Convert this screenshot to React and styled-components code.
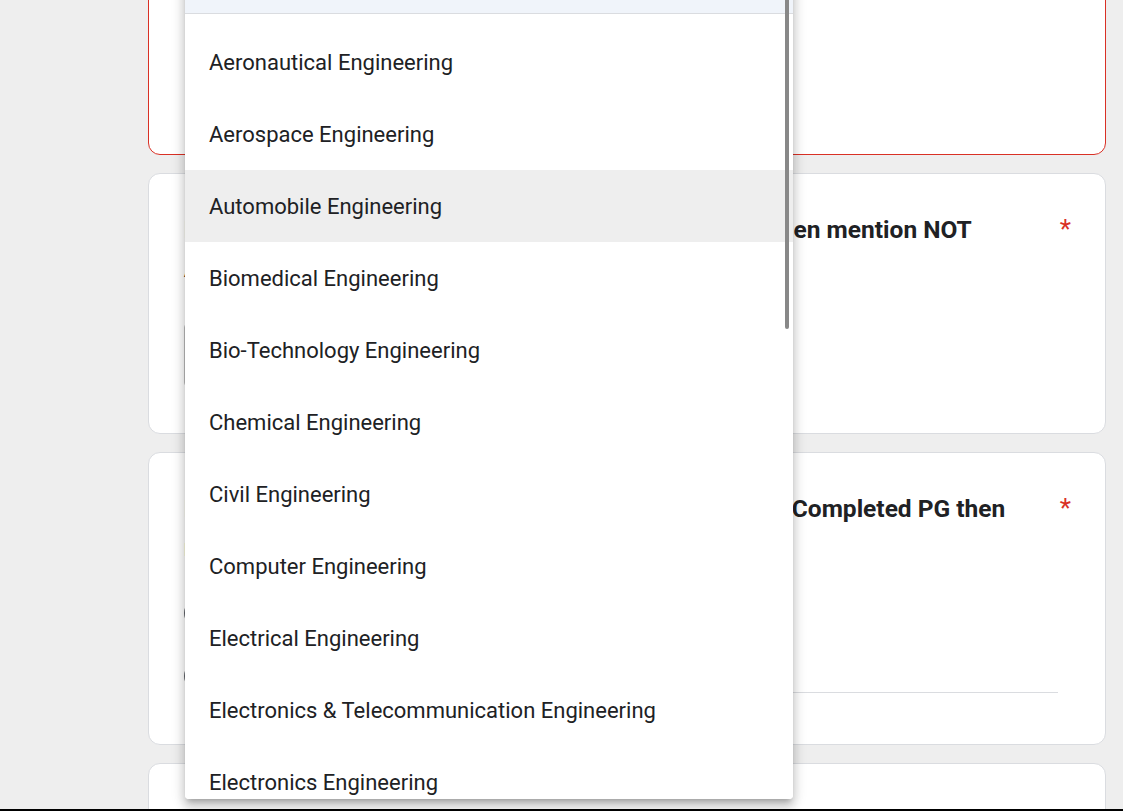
import React from 'react'
import styled, { createGlobalStyle } from 'styled-components'

const options = [
  'Aeronautical Engineering',
  'Aerospace Engineering',
  'Automobile Engineering',
  'Biomedical Engineering',
  'Bio-Technology Engineering',
  'Chemical Engineering',
  'Civil Engineering',
  'Computer Engineering',
  'Electrical Engineering',
  'Electronics & Telecommunication Engineering',
  'Electronics Engineering',
]

export default function App() {
  return (
    <Page>
      <GlobalStyle />
      <Column>
        <Card error height="260px">
          <QuestionRow>
            <Title>UG Branch</Title>
            <Required>*</Required>
          </QuestionRow>
        </Card>

        <Card>
          <QuestionRow>
            <Title>PG Specialization (If you have still not Completed PG then mention NOT APPLICABLE)</Title>
            <Required>*</Required>
          </QuestionRow>
          <SelectBox gap="34px">Choose</SelectBox>
        </Card>

        <Card>
          <QuestionRow>
            <Title>P.G. Aggregate Percentage (in %), or CGPA (If you have Completed PG then mention score in percentage)</Title>
            <Required>*</Required>
          </QuestionRow>
          <Options>
            <OptionRow>
              <Radio />
              <OptionLabel>NOT APPLICABLE</OptionLabel>
            </OptionRow>
            <OptionRow>
              <Radio />
              <OptionLabel>Other:</OptionLabel>
              <OtherInput />
            </OptionRow>
          </Options>
        </Card>

        <Card height="200px">
          <QuestionRow>
            <Title>Year of Passing</Title>
            <Required>*</Required>
          </QuestionRow>
        </Card>
      </Column>

      <Menu>
        <ChosenItem>Choose</ChosenItem>
        <MenuList>
          {options.map((o) => (
            <MenuItem key={o} active={o === 'Automobile Engineering'}>
              {o}
            </MenuItem>
          ))}
        </MenuList>
        <ScrollThumb />
      </Menu>

      <BottomEdge />
    </Page>
  )
}

const GlobalStyle = createGlobalStyle`
  html, body {
    margin: 0;
    padding: 0;
    overflow: hidden;
    background: #eeeeee;
    font-family: Roboto, "Noto Sans", "Liberation Sans", sans-serif;
  }
  * { box-sizing: border-box; }
`

const Page = styled.div`
  position: relative;
  height: 811px;
  overflow: hidden;
  background: #eeeeee;
`

const Column = styled.div`
  width: 958px;
  margin: -105px 0 0 148px;
  display: flex;
  flex-direction: column;
  gap: 18px;
`

const Card = styled.div`
  background: #ffffff;
  border: 1px solid ${(p) => (p.error ? '#d93025' : '#dadce0')};
  border-radius: 12px;
  padding: 36px 34px 45px 35px;
  height: ${(p) => p.height || 'auto'};
  display: flex;
  flex-direction: column;
`

const QuestionRow = styled.div`
  display: flex;
  align-items: flex-start;
  gap: 16px;
`

const Title = styled.div`
  flex: 1;
  padding-right: 10px;
  font-size: 24.5px;
  line-height: 39px;
  font-weight: 700;
  color: #202124;
`

const Required = styled.span`
  color: #d93025;
  font-size: 26px;
  line-height: 39px;
  font-weight: 400;
`

const SelectBox = styled.div`
  margin-top: ${(p) => p.gap};
  width: 300px;
  height: 66px;
  border: 1px solid #bdbdbd;
  border-radius: 6px;
  display: flex;
  align-items: center;
  padding-left: 24px;
  font-size: 22px;
  color: #202124;
`

const Options = styled.div`
  margin-top: 14px;
  margin-bottom: -8px;
  display: flex;
  flex-direction: column;
`

const OptionRow = styled.div`
  height: 63px;
  display: flex;
  align-items: center;
  gap: 18px;
`

const Radio = styled.span`
  width: 30px;
  height: 30px;
  flex: none;
  border: 3px solid #5f6368;
  border-radius: 50%;
`

const OptionLabel = styled.span`
  font-size: 22px;
  color: #202124;
`

const OtherInput = styled.div`
  flex: 1;
  height: 34px;
  margin: 0 13px 0 0;
  border-bottom: 1px solid #dadce0;
`

const Menu = styled.div`
  position: absolute;
  left: 185px;
  top: -59px;
  width: 608px;
  height: 858px;
  overflow: hidden;
  background: #ffffff;
  border-radius: 4px;
  box-shadow: 0 8px 10px 1px rgba(0, 0, 0, 0.14), 0 3px 14px 2px rgba(0, 0, 0, 0.12),
    0 5px 5px -3px rgba(0, 0, 0, 0.2);
`

const ChosenItem = styled.div`
  height: 73px;
  background: #f0f4fa;
  border-bottom: 1px solid #dadce0;
  display: flex;
  align-items: center;
  padding-left: 24px;
  font-size: 22px;
  color: #202124;
`

const MenuList = styled.div`
  padding-top: 12px;
  display: flex;
  flex-direction: column;
`

const MenuItem = styled.div`
  height: 72px;
  flex: none;
  display: flex;
  align-items: center;
  padding-left: 24px;
  font-size: 22px;
  color: #202124;
  background: ${(p) => (p.active ? '#eeeeee' : '#ffffff')};
`

const ScrollThumb = styled.div`
  position: absolute;
  top: 0;
  right: 4px;
  width: 4px;
  height: 388px;
  background: #888888;
  border-radius: 2px;
`

const BottomEdge = styled.div`
  position: absolute;
  left: 0;
  right: 0;
  bottom: 0;
  height: 2px;
  background: #000000;
`
